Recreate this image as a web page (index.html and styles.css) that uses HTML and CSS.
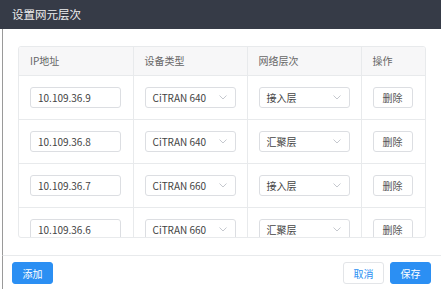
FILE: index.html
```html
<!DOCTYPE html>
<html lang="zh-CN">
<head>
  <meta charset="UTF-8" />
  <title>设置网元层次</title>
  <link rel="stylesheet" href="styles.css">
</head>
<body>
  <div class="modal">
    <div class="modal-header">设置网元层次</div>
    <div class="modal-body">
      <div class="table-wrap">
        <table class="ne-table">
          <colgroup>
            <col class="col-ip">
            <col class="col-type">
            <col class="col-layer">
            <col>
          </colgroup>
          <thead>
            <tr>
              <th>IP地址</th>
              <th>设备类型</th>
              <th>网络层次</th>
              <th>操作</th>
            </tr>
          </thead>
          <tbody id="ne-rows"></tbody>
        </table>
      </div>
    </div>
    <div class="modal-footer">
      <button type="button" class="btn btn-primary">添加</button>
      <div class="footer-right">
        <button type="button" class="btn btn-default">取消</button>
        <button type="button" class="btn btn-primary">保存</button>
      </div>
    </div>
  </div>

  <script>
    const rows = [
      { ip: "10.109.36.9", type: "CiTRAN 640", layer: "接入层" },
      { ip: "10.109.36.8", type: "CiTRAN 640", layer: "汇聚层" },
      { ip: "10.109.36.7", type: "CiTRAN 660", layer: "接入层" },
      { ip: "10.109.36.6", type: "CiTRAN 660", layer: "汇聚层" }
    ];

    const arrow = `<svg class="arrow" width="8" height="5" viewBox="0 0 8 5"><path d="M0.5 0.5 L4 4 L7.5 0.5" fill="none" stroke="#c5c8ce" stroke-width="1"/></svg>`;

    const tbody = document.getElementById("ne-rows");
    rows.forEach(r => {
      const tr = document.createElement("tr");
      tr.innerHTML = `
        <td><div class="field">${r.ip}</div></td>
        <td><div class="field select"><span>${r.type}</span>${arrow}</div></td>
        <td><div class="field select"><span>${r.layer}</span>${arrow}</div></td>
        <td><button type="button" class="btn btn-small">删除</button></td>
      `;
      tbody.appendChild(tr);
    });
  </script>
</body>
</html>
```

FILE: styles.css
```css
* {
  box-sizing: border-box;
  margin: 0;
  padding: 0;
}

body {
  width: 441px;
  height: 299px;
  background: #fff;
  font-family: "Noto Sans CJK SC", "Noto Sans", sans-serif;
  color: #444;
  overflow: hidden;
}

.modal {
  width: 441px;
}

.modal-header {
  height: 29px;
  background-color: #363b47;
  color: #f0f0f0;
  font-size: 11.5px;
  line-height: 29px;
  padding-left: 12px;
}

.modal-body {
  margin-left: 2px;
  border-left: 1px solid #9a9a9a;
  padding: 17px 15px 17px 15px;
}

.table-wrap {
  width: 408px;
  height: 192px;
  border: 1px solid #e8eaec;
  border-radius: 3px;
  overflow: hidden;
}

.ne-table {
  width: 100%;
  border-collapse: collapse;
  table-layout: fixed;
  font-size: 10px;
}

.col-ip,
.col-type,
.col-layer {
  width: 114px;
}

.ne-table th {
  height: 28px;
  background-color: #f7f7f8;
  font-weight: normal;
  font-size: 10px;
  color: #666;
  text-align: left;
  padding-left: 11px;
  border-bottom: 1px solid #e8eaec;
  border-right: 1px solid #e8eaec;
}

.ne-table td {
  height: 44px;
  padding-left: 11px;
  border-bottom: 1px solid #e8eaec;
  border-right: 1px solid #e8eaec;
}

.ne-table th:last-child,
.ne-table td:last-child {
  border-right: none;
}

.field {
  width: 91px;
  height: 21px;
  border: 1px solid #dcdee2;
  border-radius: 3px;
  padding-left: 7px;
  line-height: 19px;
  color: #444;
  background: #fff;
}

.select {
  display: flex;
  align-items: center;
  justify-content: space-between;
  padding-right: 8px;
}

.arrow {
  display: block;
}

.btn {
  font-family: "Noto Sans CJK SC", sans-serif;
  font-size: 10px;
  height: 22px;
  width: 41px;
  border-radius: 3px;
  border: 1px solid transparent;
  cursor: pointer;
}

.btn-primary {
  background-color: #2b8ff3;
  border-color: #2b8ff3;
  color: #fff;
}

.btn-default {
  background-color: #fff;
  border-color: #e3e5e8;
  color: #2b8ff3;
}

.btn-small {
  width: 40px;
  height: 21px;
  background: #fff;
  border-color: #dcdee2;
  color: #555;
}

.modal-footer {
  margin-left: 2px;
  border-left: 1px solid #9a9a9a;
  border-top: 1px solid #e8eaec;
  height: 34px;
  display: flex;
  align-items: flex-start;
  justify-content: space-between;
  padding: 6px 10px 0 9px;
}

.footer-right {
  display: flex;
  gap: 6px;
}
```
